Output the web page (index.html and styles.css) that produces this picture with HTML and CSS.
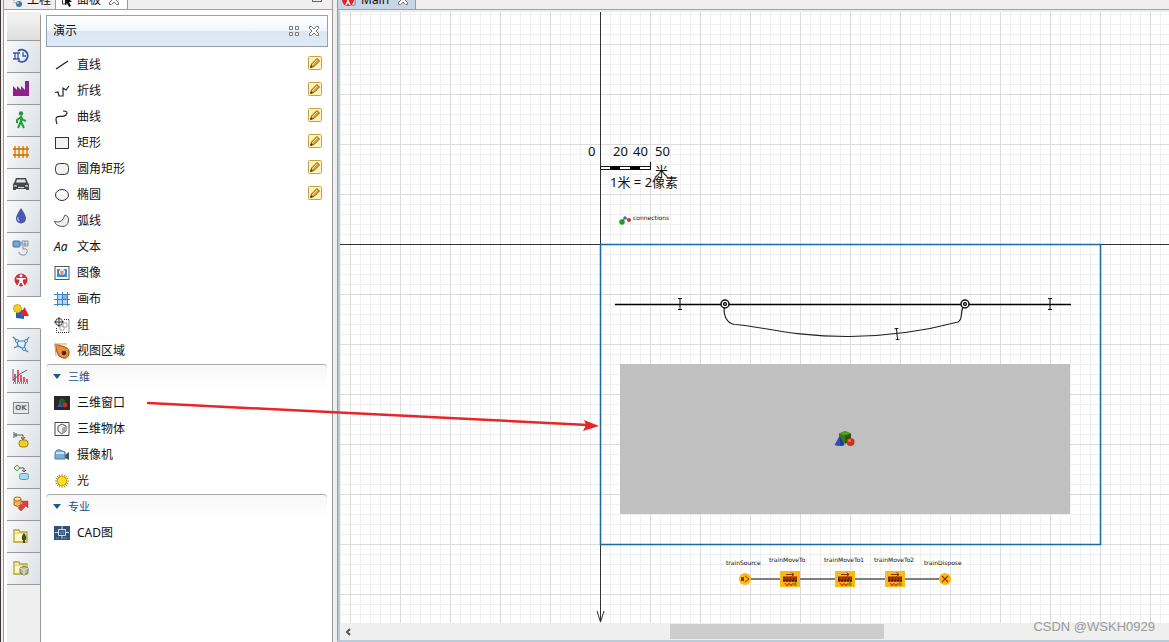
FILE: index.html
```html
<!DOCTYPE html>
<html lang="zh-CN">
<head>
<meta charset="utf-8">
<title>Main</title>
<link rel="stylesheet" href="styles.css">
</head>
<body>
<svg class="defs" aria-hidden="true">
  <symbol id="pencil" viewBox="0 0 14 14"><rect x=".5" y=".5" width="13" height="13" rx="1" fill="#fff4be" stroke="#c8a03c"/><path d="M2.500 11.500l1-3.500 5.500-5.500 2.500 2.500L6 10.500z" fill="#e6a52c" stroke="#79500f" stroke-width=".9"/><path d="M4 9l5-5" stroke="#ffe08a"/><path d="M2.300 11.700l.8-2.400 1.600 1.600z" fill="#4a240c"/></symbol>
  <symbol id="close" viewBox="0 0 12 12"><path d="M1.500 1.500h2L6 4l2.500-2.500h2v2L8 6l2.500 2.500v2h-2L6 8l-2.500 2.500h-2v-2L4 6 1.500 3.500z" fill="#fff" stroke="#777"/></symbol>
  <symbol id="move" viewBox="0 0 20 16"><rect width="20" height="16" fill="#fdb813"/><path d="M6 3.500h8M11.500 1.500l2.500 2-2.500 2" fill="none" stroke="#7b3300"/><rect x="3" y="5.500" width="14" height="5" fill="#8f2200"/><path d="M3 10h14" stroke="#401000" stroke-dasharray="2 1"/><path d="M6 6v3M9 6v3M12 6v3M15 6v3" stroke="#ce6410" stroke-width=".7"/><path d="M5 12l2 2.500 2-2 2 2 2-2" fill="none" stroke="#e33516" stroke-width="1.200"/><circle cx="15" cy="13" r="2" fill="#7b9f16"/></symbol>
  <symbol id="tick" viewBox="0 0 6 12"><path d="M1 .5h4M1 11.500h4M3 .5v11" stroke="#111" fill="none"/></symbol>
</svg>
<div class="app">
  <aside class="side">
    <div class="tabs" role="tablist">
      <button class="tab" role="tab"><svg width="13" height="16"><path d="M3 2v9h7" fill="none" stroke="#888" stroke-dasharray="1 1"/><circle cx="8" cy="12" r="3" fill="#3c79a8"/><circle cx="7" cy="11" r="1" fill="#b5d9ef"/></svg>工程</button>
      <button class="tab tab-on" role="tab"><svg width="13" height="16"><path d="M1.500 3v9h5" fill="none" stroke="#333"/><path d="M4 3l7 7H8l2 4-2 1-2-4-2 2z" fill="#111"/></svg>面板<svg class="tab-close" width="12" height="12"><use href="#close"/></svg></button>
      <span class="fill"></span>
      <button class="restore" aria-label="还原"></button>
    </div>
    <div class="side-body">
      <nav class="cats" aria-label="库">
        <button class="cat cat-first" aria-label="库"></button>
        <button class="cat" aria-label="流程"><svg viewBox="0 0 20 20"><path d="M7 5a6 6 0 1 1 0 9.500" fill="none" stroke="#3a59a5" stroke-width="2"/><path d="M12 6v4h3M2 7h7M2 13h7M4 7v6M7 7v6" fill="none" stroke="#3a59a5" stroke-width="1.300"/></svg></button>
        <button class="cat" aria-label="制造"><svg viewBox="0 0 20 20"><path d="M2 18V8l4 4V8l4 4V8l4 4V3h4v15z" fill="#902087"/></svg></button>
        <button class="cat" aria-label="行人"><svg viewBox="0 0 20 20"><circle cx="10" cy="3.500" r="2.200" fill="#229b3b"/><path d="M10 6v6l3 6M10 11l-3 7M10 7l-4 3v3M10 7l2 3 3 1" fill="none" stroke="#229b3b" stroke-width="2"/></svg></button>
        <button class="cat" aria-label="轨道"><svg viewBox="0 0 20 20"><path d="M4 4v12M8 4v12M12 4v12M16 4v12" stroke="#f29b28" stroke-width="2"/><path d="M2 7h16M2 13h16" stroke="#b96f1a" stroke-width="1.500"/></svg></button>
        <button class="cat" aria-label="道路"><svg viewBox="0 0 20 20"><path d="M5 4h10l2 5 1 1v6h-3v-1H5v1H2v-6l1-1z" fill="#484848"/><path d="M6 5.500h8l1 3H5z" fill="#e2e5e8"/><path d="M3 11l3 .5v1H3zM17 11l-3 .5v1h3zM7 13h6v1H7z" fill="#ddd"/></svg></button>
        <button class="cat" aria-label="流体"><svg viewBox="0 0 20 20"><path d="M10 2Q5 9 5 12.500a5 5 0 0 0 10 0Q15 9 10 2z" fill="#4b58b0"/><path d="M7 11q-1 3 1.500 4" fill="none" stroke="#a5b0e5" stroke-width="1.300"/></svg></button>
        <button class="cat" aria-label="物料"><svg viewBox="0 0 20 20"><rect x="2" y="3" width="7" height="6" rx="1" fill="#6fa9dc" stroke="#4c6f93"/><path d="M9 5h3M11 3h6v5h-6zM11 6h6M14 3v5M12 9v2q5-1 4 3t-5 3-3-3" fill="none" stroke="#85919b"/></svg></button>
        <button class="cat" aria-label="智能体"><svg viewBox="0 0 20 20"><circle cx="10" cy="10" r="6.500" fill="#cf3038"/><circle cx="10" cy="5.800" r="1.500" fill="#fff"/><path d="M5.500 8.500l3.500.5v3l-2 4M14.500 8.500L11 9v3l2 4" fill="none" stroke="#fff" stroke-width="1.600"/><path d="M9 8h2v5H9z" fill="#fff"/></svg></button>
        <button class="cat cat-on" aria-label="演示"><svg viewBox="0 0 20 20"><path d="M5 8h8v9l-8-1z" fill="#245fbf"/><circle cx="6.500" cy="6.500" r="4" fill="#f5ce24" stroke="#d5a715"/><path d="M13.500 5l4.500 9H9z" fill="#e4281f"/></svg></button>
        <button class="cat" aria-label="空间标记"><svg viewBox="0 0 20 20"><path d="M2 3l4 4h9l3-4M6 7l1 5 6 3 2-8M7 12l-4 2M13 15l4 3" fill="none" stroke="#2d83c4" stroke-width="1.200"/><g fill="#fff" stroke="#2d83c4"><circle cx="6" cy="7" r="1.500"/><circle cx="15" cy="7" r="1.500"/><circle cx="13" cy="15" r="1.500"/></g></svg></button>
        <button class="cat" aria-label="分析"><svg viewBox="0 0 20 20"><path d="M4 8v8M7 4v12M10 9v7M13 11v5M16 13v3" stroke="#d64b4b" stroke-width="1.800"/><path d="M2 14l7-6 7-4M2 3v12" fill="none" stroke="#53619c"/><path d="M2 17h16" stroke="#222" stroke-dasharray="1 1"/></svg></button>
        <button class="cat" aria-label="控件"><span class="ok">OK</span></button>
        <button class="cat" aria-label="状态图"><svg viewBox="0 0 20 20"><path d="M3 2v6M3 5h9v4M10 7l2 3 2-3M5 3v4" fill="none" stroke="#555"/><rect x="8" y="10" width="9" height="7" rx="3" fill="#f4cc22" stroke="#9d821c"/></svg></button>
        <button class="cat" aria-label="行动图"><svg viewBox="0 0 20 20"><path d="M6 3l3 3-3 3-3-3z" fill="#dcf3c7" stroke="#56964a"/><path d="M9 6h4v4M11 8l2 2 2-2" fill="none" stroke="#555"/><rect x="8.500" y="11.500" width="9" height="6" rx="2" fill="#a7dced" stroke="#559bb5"/></svg></button>
        <button class="cat" aria-label="连接"><svg viewBox="0 0 20 20"><path d="M3 5v6q3 3 7 0V5z" fill="#efb353" stroke="#aa6d20"/><ellipse cx="6.500" cy="5" rx="3.500" ry="2" fill="#ffe0a0" stroke="#aa6d20"/><path d="M7 14l5-5-2-2h7v7l-2-2-5 5z" fill="#db4141" stroke="#b92e2e" stroke-width=".5"/></svg></button>
        <button class="cat" aria-label="图片"><svg viewBox="0 0 20 20"><path d="M3 4h5l1 2h7v10H3z" fill="#fffac7" stroke="#b7a22c" stroke-width="1.300"/><path d="M3 7h13" stroke="#d1bd45"/><path d="M13 7q3 3 2 7h-1v3h-2v-3h-1q-1-4 2-7z" fill="#3e4e1c"/></svg></button>
        <button class="cat" aria-label="三维物体"><svg viewBox="0 0 20 20"><path d="M3 4h5l1 2h7v10H3z" fill="#fffac7" stroke="#b7a22c" stroke-width="1.300"/><path d="M3 7h13" stroke="#d1bd45"/><path d="M13 8l4 2v5l-4 2-4-2v-5z" fill="#b9b9a0" stroke="#777760"/><path d="M9 10l4 2 4-2M13 12v5" fill="none" stroke="#e4e4ce"/></svg></button>
      </nav>
      <section class="palette">
        <header class="head"><h1>演示</h1><button class="tool" aria-label="网格"><svg width="12" height="12" fill="#fff" stroke="#777"><path d="M1.500 1.500h3v3h-3zM7.500 1.500h3v3h-3zM1.500 7.500h3v3h-3zM7.500 7.500h3v3h-3z"/></svg></button><button class="tool" aria-label="关闭"><svg width="12" height="12"><use href="#close"/></svg></button></header>
        <ul class="list">
          <li><button class="item"><svg viewBox="0 0 16 16"><path d="M2 12L14 4" stroke="#222" stroke-width="1.300"/></svg>直线</button><button class="edit" aria-label="绘制直线"><svg><use href="#pencil"/></svg></button></li>
          <li><button class="item"><svg viewBox="0 0 16 16"><path d="M1 9.500l3-.5 1 4h4V5l3 2 3-4" fill="none" stroke="#222" stroke-width="1.200"/></svg>折线</button><button class="edit" aria-label="绘制折线"><svg><use href="#pencil"/></svg></button></li>
          <li><button class="item"><svg viewBox="0 0 16 16"><path d="M3 15C-1 3 8 10 12 6q3-4-3-4" fill="none" stroke="#222" stroke-width="1.200"/></svg>曲线</button><button class="edit" aria-label="绘制曲线"><svg><use href="#pencil"/></svg></button></li>
          <li><button class="item"><svg viewBox="0 0 16 16"><rect x="1.500" y="2.500" width="13" height="11" fill="#f1f1f1" stroke="#333"/></svg>矩形</button><button class="edit" aria-label="绘制矩形"><svg><use href="#pencil"/></svg></button></li>
          <li><button class="item"><svg viewBox="0 0 16 16"><rect x="1.500" y="2.500" width="13" height="11" rx="4" fill="#f1f1f1" stroke="#333"/></svg>圆角矩形</button><button class="edit" aria-label="绘制圆角矩形"><svg><use href="#pencil"/></svg></button></li>
          <li><button class="item"><svg viewBox="0 0 16 16"><ellipse cx="8" cy="8" rx="6.500" ry="5.500" fill="#f8f8f8" stroke="#333"/></svg>椭圆</button><button class="edit" aria-label="绘制椭圆"><svg><use href="#pencil"/></svg></button></li>
          <li><button class="item"><svg viewBox="0 0 16 16"><path d="M.5 8.500Q7 10 9 6l2-4q4 1 3.500 6-1 6-7 5.500-6-1-7-5z" fill="#eee" stroke="#555"/></svg>弧线</button></li>
          <li><button class="item"><span class="aa">Aa</span>文本</button></li>
          <li><button class="item"><svg viewBox="0 0 16 16"><rect x="1" y="1.500" width="14" height="13" fill="#fff" stroke="#555"/><rect x="3" y="4" width="10" height="8" fill="#2e8fdc"/><circle cx="8" cy="7" r="3" fill="#eee"/><path d="M6 6h4l-1 4H7z" fill="#ef8d65"/></svg>图像</button></li>
          <li><button class="item"><svg viewBox="0 0 16 16"><path d="M3 3h10v10H3z" fill="#b8d6f2"/><path d="M8 3h5v5H8z" fill="#82b2e6"/><path d="M3.500 1v14M8.500 1v14M13.500 1v14M0 3.500h16M0 8.500h16M0 13.500h16" stroke="#3686c7"/></svg>画布</button></li>
          <li><button class="item"><svg viewBox="0 0 16 16"><circle cx="5" cy="5" r="3.500" fill="none" stroke="#333"/><path d="M5 0v10M0 5h10" stroke="#333"/><path d="M10 2.500h5v13H2.500V11" fill="none" stroke="#222" stroke-dasharray="1 1"/><path d="M9 6h4v4H9zM6 9h4v4H6z" fill="none" stroke="#aaa"/></svg>组</button></li>
          <li><button class="item"><svg viewBox="0 0 16 16"><path d="M1 1l10 3q5 2 4 7t-6 4q-5-1-6-6z" fill="#e99138" stroke="#9b4d15"/><path d="M1 1l1 12M1 1h12" stroke="#e59b4d"/><circle cx="10" cy="10" r="2.300" fill="#4a271c"/></svg>视图区域</button></li>
        </ul>
        <h2 class="group"><button>三维</button></h2>
        <ul class="list">
          <li><button class="item"><svg viewBox="0 0 16 16"><path d="M0 1h16v14H0z" fill="#292929"/><path d="M8 3l3 2v4H5V5z" fill="#215e19"/><path d="M6 7l3 5H3z" fill="#275bba"/><circle cx="11" cy="10" r="2.500" fill="#be3026"/></svg>三维窗口</button></li>
          <li><button class="item"><svg viewBox="0 0 16 16"><path d="M1 1.500h14v13H1z" fill="#fff" stroke="#444"/><path d="M8 3l4 2v5l-4 3-4-3V5z" fill="#eee" stroke="#555"/><path d="M8 7l4-2v5l-4 3z" fill="#aaa"/></svg>三维物体</button></li>
          <li><button class="item"><svg viewBox="0 0 16 16"><path d="M11 8l4-3v8l-4-2z" fill="#445461"/><path d="M1 6q1-4 5-3l5 2v7H1z" fill="#7caedc" stroke="#507ca9"/><path d="M2 6h8" stroke="#c9e3fa" stroke-width="2"/></svg>摄像机</button></li>
          <li><button class="item"><svg viewBox="0 0 16 16"><path d="M8 1v14M1 8h14M3 3l10 10M3 13L13 3M5 1.500l6 13M11 1.500l-6 13M1.500 5l13 6M1.500 11l13-6" stroke="#b19008"/><circle cx="8" cy="8" r="4.500" fill="#ffe12a" stroke="#caa30d"/></svg>光</button></li>
        </ul>
        <h2 class="group"><button>专业</button></h2>
        <ul class="list">
          <li><button class="item"><svg viewBox="0 0 16 16"><path d="M0 1h16v14H0z" fill="#2e527c"/><path d="M4.500 4.500h7v6h-7zM8 1v3M8 10v4M1 7.500h3M12 7.500h3" fill="none" stroke="#d7e4ef"/><path d="M6.500 6.500h3v2h-3zM2 13h4M10 13h4" fill="none" stroke="#8eb0cf" stroke-dasharray="1 1"/></svg>CAD图</button></li>
        </ul>
      </section>
    </div>
  </aside>
  <main class="editor">
    <div class="tabs" role="tablist"><button class="tab main-tab" role="tab"><svg width="16" height="16"><path d="M8 3h6v10H8" fill="#fff" stroke="#777"/><circle cx="7" cy="8" r="6" fill="#d9272e"/><path d="M3 6l4 1 4-1M7 5v4l-2 4M7 9l2 4" fill="none" stroke="#fff" stroke-width="1.500"/></svg>Main<svg class="tab-close" width="12" height="12"><use href="#close"/></svg></button></div>
    <div class="canvas">
      <svg class="drawing" width="829" height="611" viewBox="340 12 829 611">
        <path class="axis" d="M600.500 12v609M340 244.500h829M597 611l3.500 11 3.500-11"/>
        <path class="bound" d="M600.500 244.500h500v300h-500z"/>
        <g class="scale"><text x="588" y="156">0</text><text x="613" y="156">20</text><text x="633" y="156">40</text><text x="655" y="156">50</text><text x="655" y="176">米</text><text x="610" y="187">1米 = 2像素</text></g>
        <path d="M600.500 166.500h50v3h-50zM650.500 162v8" fill="#fff" stroke="#111"/><path d="M610 168h10M630 168h10" stroke="#000" stroke-width="3"/>
        <path d="M622 221l3-3 4 2" fill="none" stroke="#667"/><circle cx="622" cy="222" r="2.800" fill="#259b29"/><circle cx="625" cy="218" r="1.700" fill="#5560b5"/><circle cx="629" cy="220" r="2" fill="#c83545"/><text class="tiny" x="633" y="220">connections</text>
        <path d="M615 304.500h456" stroke="#000" stroke-width="1.500"/>
        <path d="M725 304C722 315 727 323 734 324.500C755 325 792 337 850 336.500C893 336 928 330 958 322C964 319 959 310 965 304" fill="none" stroke="#222" stroke-width="1.200"/>
        <g fill="#fff" stroke="#111" stroke-width="1.500"><circle cx="725" cy="304" r="4"/><circle cx="965" cy="304" r="4"/></g><g fill="#777" stroke="#111"><circle cx="725" cy="304" r="1.700"/><circle cx="965" cy="304" r="1.700"/></g>
        <use href="#tick" x="677" y="298" width="6" height="12"/><use href="#tick" x="1047" y="298" width="6" height="12"/><use href="#tick" x="894" y="328" width="6" height="12" transform="rotate(-6 897 334)"/>
        <path d="M620 364h450v150H620z" fill="#c0c0c0"/>
        <path d="M845 431l6 2.500v8l-6 2-6-2v-8z" fill="#397817"/><path d="M839 433.500l6 2 6-2-6-2.500z" fill="#559b29"/><path d="M845 435.500l6-2v8l-6 2z" fill="#29580e"/><path d="M839.500 436l5 9q-5 2-10 0z" fill="#2856b7"/><path d="M839.500 436l5 9-4 1z" fill="#1a3d91"/><circle cx="850.500" cy="442" r="4" fill="#c83424"/><circle cx="849.500" cy="440.500" r="1.500" fill="#ed735e"/>
        <path d="M750 579h190" stroke="#555" stroke-width="1.500"/>
        <circle cx="745" cy="579" r="6" fill="#fdb813"/><path d="M741 577h3v4h-3z" fill="#8c3b00"/><path d="M745 576l4 3-4 3" fill="none" stroke="#8c3b00"/>
        <use href="#move" x="780" y="571" width="20" height="16"/><use href="#move" x="835" y="571" width="20" height="16"/><use href="#move" x="885" y="571" width="20" height="16"/>
        <circle cx="945" cy="579" r="6" fill="#fdb813"/><path d="M942 576l6 6M948 576l-6 6" stroke="#8c3b00" stroke-width="1.200"/>
        <g class="tiny"><text x="726" y="565">trainSource</text><text x="769" y="562">trainMoveTo</text><text x="824" y="562">trainMoveTo1</text><text x="874" y="562">trainMoveTo2</text><text x="924" y="565">trainDispose</text></g>
      </svg>
    </div>
    <div class="scroll"><button class="scroll-left" aria-label="向左滚动"><svg width="8" height="8"><path d="M6 1L3 4l3 3" fill="none" stroke="#555" stroke-width="2"/></svg></button><span class="track-before"></span><span class="thumb"></span><span class="track-after"></span></div>
  </main>
  <svg class="callout" width="456" height="34" viewBox="145 400 456 34" aria-hidden="true"><path d="M148 403L588 425" stroke="#e8252a" stroke-width="2.500" stroke-linecap="round"/><path d="M599 426l-15-6 2 5-3 6z" fill="#e8252a"/></svg>
  <div class="credit">CSDN @WSKH0929</div>
</div>
</body>
</html>
```

FILE: styles.css
```css
* { box-sizing: border-box; }
body { margin: 0; color: #111; font: 12px/16px "Noto Sans", "Noto Sans CJK SC", sans-serif; }
button { margin: 0; padding: 0; border: 0; background: none; color: inherit; font: inherit; }
h1, h2, ul { margin: 0; padding: 0; font: inherit; list-style: none; }
svg { flex: none; display: block; }
.defs { position: absolute; width: 0; height: 0; }
.app { position: relative; display: flex; height: 100vh; overflow: hidden; background: #f0eeee; border-left: 1px solid #3c3636; }
.side { display: flex; flex-direction: column; flex: none; width: 330px; margin-left: 2px; border: 1px solid #999; border-top: 0; border-bottom: 0; }
.tabs { display: flex; align-items: flex-end; flex: none; height: 10px; border-bottom: 1px solid #a0a0a0; overflow: hidden; }
.tab { display: flex; align-items: center; gap: 4px; flex: none; height: 18px; padding: 0 4px 0 7px; border-right: 1px solid #999; }
.side .tab { gap: 3px; }
.side .tab-on { background: #fff; padding: 0 7px 0 5px; }
.tab-close { margin: 0 0 0 4px; }
.fill { flex: 1; }
.restore { width: 10px; height: 8px; margin: 0 10px 7px 0; border: 1px solid #666; }
.side-body { display: flex; flex: 1; min-height: 0; padding: 2px 0 0 3px; background: #fff; }
.cats { display: flex; flex-direction: column; flex: none; width: 34px; padding-top: 3px; background: #efefef; }
.cats::after { content: ""; flex: 1; border-right: 1px solid #999; }
.cat { display: flex; align-items: center; justify-content: center; flex: none; height: 32px; padding: 0 5px 2px 0; border-right: 1px solid #999; border-bottom: 1px solid #999; background: linear-gradient(110deg, #f8f9fa, #e7eaed 60%, #dde1e6); }
.cat svg { width: 20px; height: 20px; }
.cat-first { height: 26px; background: linear-gradient(#f3f3f3, #dedede); }
.cat-on { background: #fff; border-right-color: #fff; }
.ok { width: 16px; border: 1px solid #888; background: #e7e7e7; color: #666; font: bold 7px/10px "DejaVu Sans", sans-serif; text-align: center; }
.palette { flex: 1; min-width: 0; padding: 3px 4px 0 5px; background: #fff; }
.head { display: flex; align-items: center; gap: 8px; height: 32px; padding: 0 7px 0 6px; margin-bottom: 5px; border: 1px solid #96a0ac; background: linear-gradient(#fff, #f1f6fc 48%, #dce7f5 52%, #dfeaf7); }
.head h1 { flex: 1; }
.list li { display: flex; align-items: center; height: 26px; padding: 0 6px 0 8px; }
.item { display: flex; align-items: center; gap: 7px; flex: 1; height: 26px; text-align: left; }
.item svg { width: 16px; height: 16px; }
.edit { padding-bottom: 4px; }
.edit svg { width: 14px; height: 14px; }
.aa { width: 16px; font-style: italic; }
.group { height: 26px; padding-right: 1px; }
.group button { display: flex; align-items: center; gap: 7px; width: 100%; height: 26px; padding: 0 0 2px 7px; border-top: 1px solid #aaa; border-radius: 4px 4px 0 0; background: linear-gradient(#f7f7f7, #fff); color: #1d4d86; font-size: 11px; }
.group button::before { content: ""; border: 4px solid transparent; border-top: 5px solid #235789; border-bottom: 0; }
.editor { display: flex; flex-direction: column; flex: 1; min-width: 0; margin-left: 4px; border-left: 1px solid #999; border-bottom: 2px solid #bdcbd9; }
.main-tab { padding: 0 6px 0 3px; background: #c7d5e4; }
.canvas { flex: 1; min-height: 0; overflow: hidden; border-left: 2px solid #bdcbd9; border-top: 2px solid #e8edf2; background-color: #fff; background-image: linear-gradient(90deg, #dcdcdc 1px, transparent 1px), linear-gradient(#dcdcdc 1px, transparent 1px), linear-gradient(90deg, #f0f0f0 1px, transparent 1px), linear-gradient(#f0f0f0 1px, transparent 1px); background-size: 50px 50px, 50px 50px, 10px 10px, 10px 10px; background-position: 10px 32px, 10px 32px, 0 2px, 0 2px; }
.axis { fill: none; stroke: #333; }
.bound { fill: none; stroke: #1768a5; stroke-width: 1.5px; }
.scale { fill: #111; font-size: 13px; }
.tiny { fill: #111; font: 6px "DejaVu Sans", sans-serif; }
.scroll { display: flex; flex: none; height: 17px; padding: 1px 0; border-left: 2px solid #bdcbd9; background: #efefef; }
.scroll-left { display: flex; align-items: center; justify-content: center; flex: none; width: 15px; }
.track-before { flex: 315; }
.thumb { flex: 214; background: #cdcdcd; }
.track-after { flex: 285; }
.callout { position: absolute; left: 144px; top: 400px; }
.credit { position: absolute; right: 14px; bottom: 6px; color: #999; font: 13px/18px "Liberation Sans", sans-serif; }
```
